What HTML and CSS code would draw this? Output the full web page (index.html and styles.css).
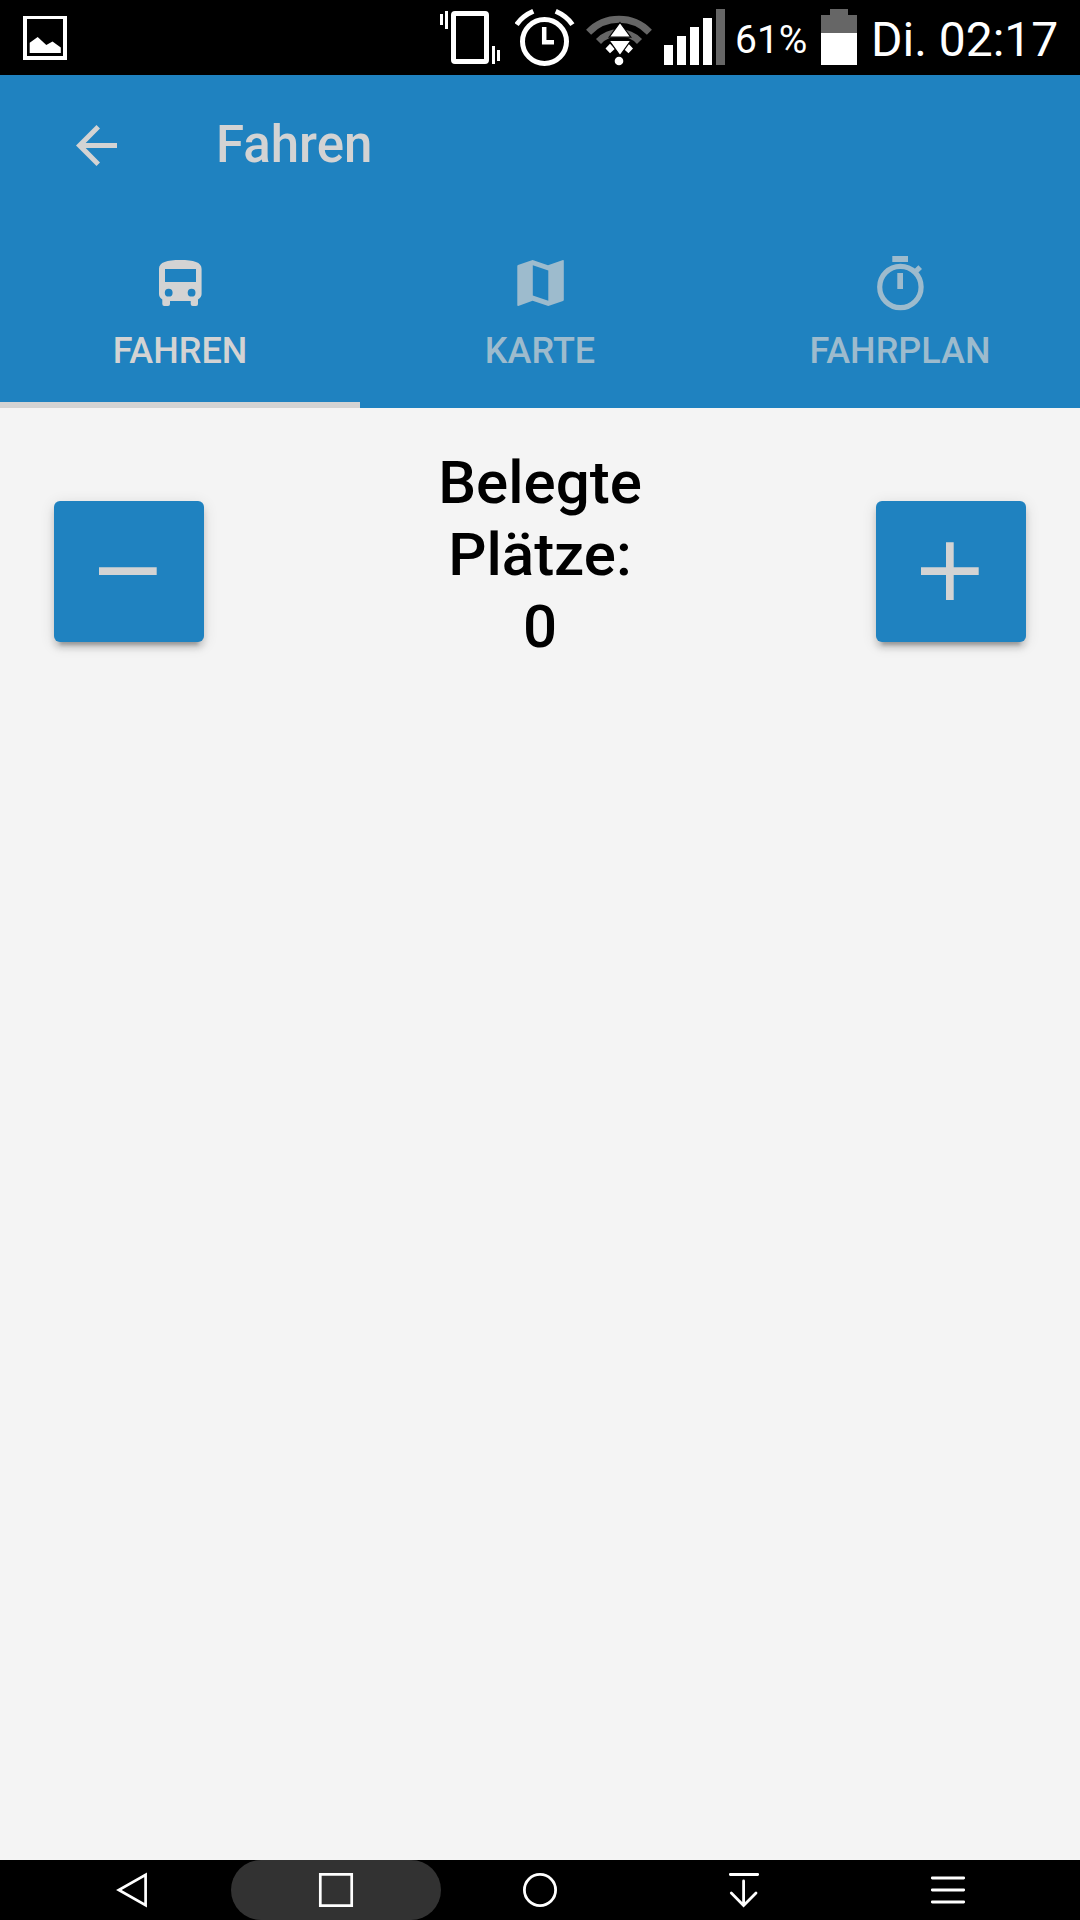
FILE: index.html
```html
<!DOCTYPE html>
<html lang="de">
<head>
<meta charset="utf-8">
<title>Fahren</title>
<link rel="stylesheet" href="styles.css">
</head>
<body>
<div class="screen">
  <div class="status">
    <svg class="status-picture" width="44" height="75" viewBox="23 0 44 75">
      <path fill="#fff" fill-rule="evenodd" d="M23 16H67V60H23ZM27 19V56H63V19Z"/>
      <path fill="#fff" d="M29.7 53V42.7L37.7 37L46.3 45L52.5 41.5L60.8 47.5V53Z"/>
    </svg>
    <div class="status-right">
      <svg class="vibrate" width="60" height="75" viewBox="440 0 60 75">
        <rect x="453.5" y="13.5" width="33" height="48" rx="1.5" fill="none" stroke="#fff" stroke-width="5"/>
        <path fill="#fff" d="M440 14h3v11h-3zM445 11h3v18h-3zM492 46h3v18h-3zM497 50h3v11h-3z"/>
      </svg>
      <svg class="alarm" width="60" height="75" viewBox="515 0 60 75" fill="none" stroke="#fff">
        <circle cx="544.5" cy="41.5" r="22" stroke-width="5"/>
        <path stroke-width="4.5" d="M544.2 27V42.2H554"/>
        <path stroke-width="5" d="M516.6 24.6Q522.5 16 533.3 11.3M555.7 11.3Q566.5 16 572.4 24.6"/>
      </svg>
      <svg class="wifi" width="66" height="75" viewBox="586 0 66 75">
        <path fill="none" stroke="#666" stroke-width="7" d="M588.6 32.2A42.3 42.3 0 0 1 649.4 32.2M598.5 41.5A28.5 28.5 0 0 1 639.5 41.5"/>
        <circle cx="619" cy="61" r="4.3" fill="#fff"/>
        <path fill="#fff" d="M605.5 48.5L610 43.8L615 48.7L610 53.3ZM623.5 48.7L628.5 43.8L633 48.5L628.5 53.3Z"/>
        <path fill="#fff" stroke="#000" stroke-width="1.2" d="M620 22.5L630.8 37.2H609.2ZM609.2 40.5H630.8L620 55.5Z"/>
      </svg>
      <svg class="signal" width="61" height="75" viewBox="664 0 61 75">
        <path fill="#fff" d="M664 45h9v20h-9zM677 36h9v29h-9zM690 27h9v38h-9zM703 18h9v47h-9z"/>
        <path fill="#666" d="M716 9h9v56h-9z"/>
      </svg>
      <span class="percent">61%</span>
      <svg class="battery" width="36" height="75" viewBox="821 0 36 75">
        <path fill="#666" d="M830 9h18v6h9v18h-36V15h9z"/>
        <path fill="#fff" d="M821 33h36v32h-36z"/>
      </svg>
      <span class="clock">Di. 02:17</span>
    </div>
  </div>

  <header class="header">
    <div class="toolbar">
      <svg class="back" width="41" height="41" viewBox="76 125 41 41">
        <path fill="#d3d3d3" d="M76 145.5L96.5 125L100 128.5L85.7 142.9H117V148.1H85.7L100 162.5L96.5 166Z"/>
      </svg>
      <h1 class="title">Fahren</h1>
    </div>
    <nav class="tabs">
      <a class="tab active">
        <svg class="tab-icon" width="60" height="60" viewBox="150 253 60 60">
          <path fill="currentColor" fill-rule="evenodd" d="M159 269C159 262 167 260 180.300 260S201.600 262 201.600 269V294C201.600 296 200.500 298 198 299.500V304Q198 306 196 306H192.700Q190.700 306 190.700 304V301H170V304Q170 306 168 306H164.300Q162.300 306 162.300 304V299.500C160 298 159 296 159 294ZM165 269V282H196V269ZM168.700 288.800A3.900 3.900 0 1 0 168.700 296.600A3.900 3.900 0 1 0 168.700 288.800ZM191.600 288.800A3.900 3.900 0 1 0 191.600 296.600A3.900 3.900 0 1 0 191.600 288.800Z"/>
        </svg>
        <span>FAHREN</span>
      </a>
      <a class="tab">
        <svg class="tab-icon" width="60" height="60" viewBox="510 253 60 60">
          <path fill="currentColor" fill-rule="evenodd" d="M563 260L548 265.300L532.600 260L518 265Q517.300 265.300 517.300 266V305Q517.300 306.200 518.300 306L532.600 300.700L548.300 306L563 301Q563.800 300.700 563.800 300V261Q563.800 259.800 563 260ZM548.300 300.800L532.800 295.500V265.300L548.300 270.600Z"/>
        </svg>
        <span>KARTE</span>
      </a>
      <a class="tab">
        <svg class="tab-icon" width="60" height="60" viewBox="870 253 60 60">
          <circle cx="900.400" cy="287" r="20.700" fill="none" stroke="currentColor" stroke-width="5.200"/>
          <path fill="currentColor" d="M892.300 256H908V262H892.300ZM897.300 273H903V289H897.300ZM913.500 270L918.400 265.200L922 268.900L917.300 273.600Z"/>
        </svg>
        <span>FAHRPLAN</span>
      </a>
    </nav>
  </header>

  <main class="content">
    <button class="step">
      <svg width="58" height="58" viewBox="0 0 58 58"><path fill="#d3d3d3" d="M0 25.300H57.700V33H0Z"/></svg>
    </button>
    <div class="seats">Belegte<br>Plätze:<br>0</div>
    <button class="step">
      <svg width="58" height="58" viewBox="0 0 58 58"><path fill="#d3d3d3" d="M25 .3H32.700V25.300H57.700V33H32.700V58H25V33H0V25.300H25Z"/></svg>
    </button>
  </main>

  <div class="navbar">
    <div class="key"><svg width="60" height="60" viewBox="102 0 60 60"><path fill="none" stroke="#fff" stroke-width="2.700" d="M145.600 14.800V45.200L118.800 30Z"/></svg></div>
    <div class="key"><span class="pill"><svg width="60" height="60" viewBox="306 0 60 60"><path fill="none" stroke="#fff" stroke-width="2.700" d="M320.300 14.300H351.700V45.700H320.300Z"/></svg></span></div>
    <div class="key"><svg width="60" height="60" viewBox="510 0 60 60"><circle cx="540" cy="30" r="15.600" fill="none" stroke="#fff" stroke-width="2.800"/></svg></div>
    <div class="key"><svg width="60" height="60" viewBox="714 0 60 60"><path fill="none" stroke="#fff" stroke-width="2.800" stroke-linecap="round" d="M730.300 14.500H757.700M743.600 21V45M731.300 33L743.600 45.400L756 33"/></svg></div>
    <div class="key"><svg width="60" height="60" viewBox="918 0 60 60"><path fill="none" stroke="#fff" stroke-width="2.800" stroke-linecap="round" d="M932.300 18H963.700M932.300 30H963.700M932.300 42H963.700"/></svg></div>
  </div>
</div>
</body>
</html>
```

FILE: styles.css
```css
* { box-sizing: border-box; }
body { margin: 0; font-family: Roboto, sans-serif; }
svg { display: block; flex: none; }
.screen { width: 1080px; height: 1920px; display: flex; flex-direction: column; background: #f4f4f4; overflow: hidden; }

.status { height: 75px; flex: none; display: flex; justify-content: space-between; background: #000; color: #fff; padding: 0 22px 0 23px; }
.status-right { display: flex; line-height: 75px; white-space: nowrap; }
.vibrate { margin-right: 15px; }
.alarm { margin-right: 11px; }
.wifi { margin-right: 12px; }
.signal { margin-right: 10px; }
.percent { width: 86px; font-size: 39px; padding-top: 3px; }
.clock { width: 201px; padding-left: 14px; font-size: 48px; padding-top: 2px; }

.header { height: 333px; flex: none; background: #1f82c0; color: #d3d3d3; display: flex; flex-direction: column; }
.toolbar { height: 141px; display: flex; align-items: center; padding: 0 76px; }
.title { margin: 0 0 2px 99px; font-size: 51px; font-weight: 500; line-height: 60px; }
.tabs { flex: 1; display: grid; grid-template-columns: repeat(3, 1fr); }
.tab { display: flex; flex-direction: column; align-items: center; padding-top: 37px; border-bottom: 6px solid transparent; font-size: 36px; font-weight: 500; line-height: 42px; color: #9dbbcd; }
.tab.active { color: #d3d3d3; border-bottom-color: #d3d3d3; }
.tab-icon { margin-bottom: 17px; }

.content { flex: 1; display: flex; align-items: flex-start; justify-content: space-between; padding: 93px 54px 0; }
.step { width: 150px; height: 141px; border: 0; border-radius: 6px; background: #1f82c0; padding: 0 0 1px 45px; box-shadow: 0 6px 6px rgba(0,0,0,.14), 0 9px 3px -6px rgba(0,0,0,.2), 0 3px 15px rgba(0,0,0,.12); }
.seats { margin-top: -54px; font-size: 60px; font-weight: 500; line-height: 72px; text-align: center; color: #000; }

.navbar { height: 60px; flex: none; display: grid; grid-template-columns: repeat(5, 204px); justify-content: center; background: #000; }
.key { display: flex; justify-content: center; }
.pill { flex: none; width: 210px; height: 60px; border-radius: 30px; background: #323232; display: flex; justify-content: center; }
```
